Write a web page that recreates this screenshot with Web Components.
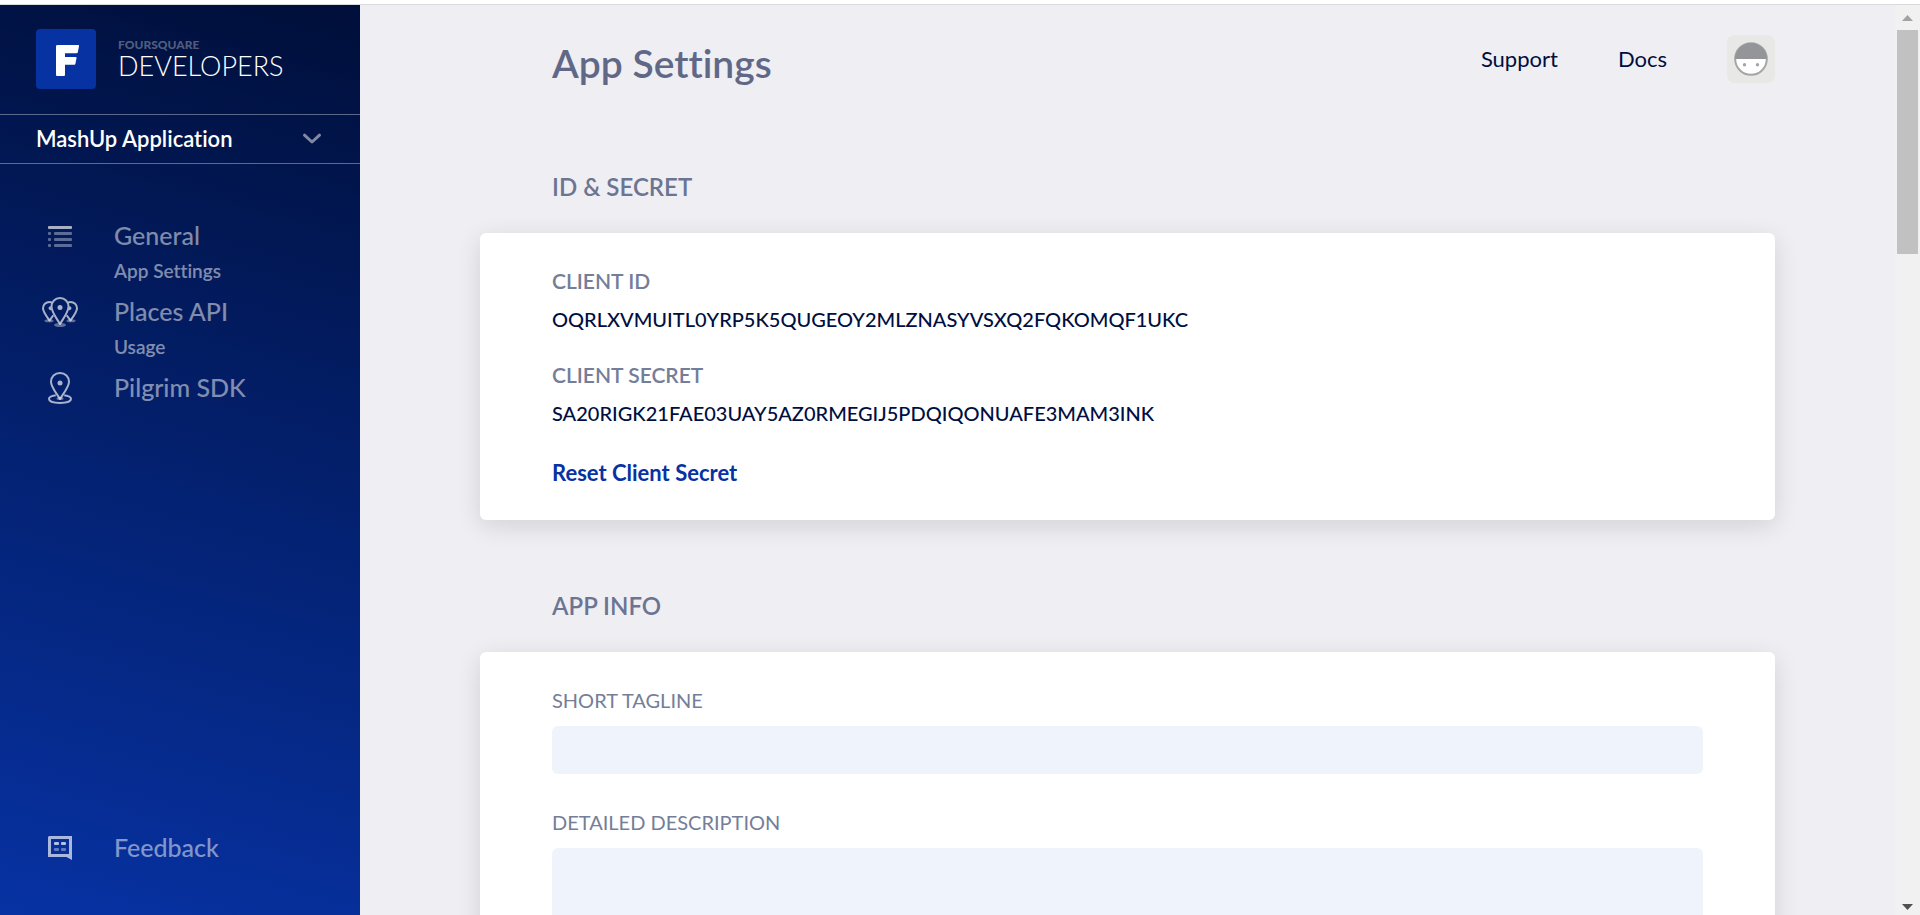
<!DOCTYPE html>
<html lang="en">
<head>
<meta charset="utf-8">
<meta name="viewport" content="width=device-width, initial-scale=1">
<title>App Settings - Foursquare Developers</title>
<style>
  body {
    margin: 0;
    font-family: Lato, "Liberation Sans", sans-serif;
    font-variant-ligatures: none;
    font-size: 20px;
    line-height: 24px;
    background: #efeef3;
    color: #000f3f;
  }
</style>
</head>
<body>
<dev-app>
  <dev-sidebar slot="sidebar">
    <dev-brand slot="brand"></dev-brand>
    <app-picker slot="picker" name="MashUp Application"></app-picker>
    <nav-item icon="list" href="#general" label="General"><a href="#settings">App Settings</a></nav-item>
    <nav-item icon="places" href="#places" label="Places API"><a href="#usage">Usage</a></nav-item>
    <nav-item icon="pilgrim" href="#pilgrim" label="Pilgrim SDK"></nav-item>
    <nav-item slot="footer" icon="feedback" href="#feedback" label="Feedback"></nav-item>
  </dev-sidebar>

  <page-header>
    App Settings
    <a slot="links" href="#support">Support</a>
    <a slot="links" href="#docs">Docs</a>
    <user-avatar slot="links"></user-avatar>
  </page-header>

  <settings-section heading="ID &amp; SECRET">
    <credential-list>
      <credential-item label="CLIENT ID">OQRLXVMUITL0YRP5K5QUGEOY2MLZNASYVSXQ2FQKOMQF1UKC</credential-item>
      <credential-item label="CLIENT SECRET">SA20RIGK21FAE03UAY5AZ0RMEGIJ5PDQIQONUAFE3MAM3INK</credential-item>
    </credential-list>
    <text-button>Reset Client Secret</text-button>
  </settings-section>

  <settings-section heading="APP INFO">
    <text-field label="SHORT TAGLINE"></text-field>
    <text-field label="DETAILED DESCRIPTION" multiline></text-field>
  </settings-section>
</dev-app>

<script>
const define = (name, render, setup) =>
  customElements.define(name, class extends HTMLElement {
    connectedCallback() {
      if (this.shadowRoot) return;
      const template = document.createElement('template');
      template.innerHTML = render(this);
      this.attachShadow({ mode: 'open' }).append(template.content.cloneNode(true));
      if (setup) setup(this.shadowRoot, this);
    }
  });
const attr = (el, name) => el.getAttribute(name).replace(/&/g, '&amp;').replace(/"/g, '&quot;');

const ICONS = {
  list: `<svg width="24" height="20" viewBox="0 0 24 20" overflow="visible" fill="#fff" aria-hidden="true">
    <rect width="24" height="3" rx="1" fill-opacity=".66"/>
    <g fill-opacity=".36">
      <rect y="6" width="3" height="3" rx="1"/><rect x="6" y="6" width="18" height="3" rx="1"/>
      <rect y="12" width="3" height="3" rx="1"/><rect x="6" y="12" width="18" height="3" rx="1"/>
      <rect y="18" width="3" height="3" rx="1"/><rect x="6" y="18" width="18" height="3" rx="1"/>
    </g></svg>`,
  places: `<svg width="36" height="30" viewBox="0 0 36 30" fill="none" stroke="#fff" stroke-width="2" stroke-linejoin="round" aria-hidden="true">
    <g stroke="none" fill="#fff" fill-opacity=".36">
      <ellipse cx="7" cy="23.800" rx="4.500" ry="1.500"/><ellipse cx="29" cy="23.800" rx="4.500" ry="1.500"/><ellipse cx="18" cy="28" rx="6" ry="2"/>
    </g>
    <g opacity=".66">
      <path d="M10.500 5.800C9.500 5.300 8.700 5 7.500 5 3.800 5 1 7.800 1 11.300c0 3.600 3.500 8 6.500 12.200 1.400-1.700 2.700-3.500 3.800-5.200"/>
      <path d="M25.500 5.800c1-.5 1.800-.8 3-.8C32.200 5 35 7.800 35 11.300c0 3.600-3.500 8-6.500 12.200-1.400-1.700-2.700-3.500-3.800-5.200"/>
      <path d="M18 1c-4.900 0-8.500 3.700-8.500 8.500C9.500 15 14 20.500 18 27c4-6.500 8.500-12 8.500-17.500C26.500 4.700 22.900 1 18 1z"/>
      <g stroke="none" fill="#fff"><circle cx="18" cy="10.500" r="2.500"/><path d="M9.500 9.400a2 2 0 1 0-.2 3.600zM26.500 9.400a2 2 0 1 1 .2 3.600z"/></g>
    </g></svg>`,
  pilgrim: `<svg width="24" height="32" viewBox="0 0 24 32" fill="none" stroke="#fff" stroke-width="2" stroke-linejoin="round" aria-hidden="true">
    <ellipse cx="12" cy="26.600" rx="3.500" ry="1.500" stroke="none" fill="#fff" fill-opacity=".4"/>
    <g opacity=".66">
      <path d="M12 1C6.700 1 3 4.900 3 9.800 3 15 8 20.500 12 27c4-6.500 9-12 9-17.200C21 4.900 17.300 1 12 1z"/>
      <path d="M7.800 23.300C4 23.800 1 25.200 1 27.100 1 29.400 5.800 31 12 31s11-1.600 11-3.900c0-1.900-3-3.300-6.800-3.800"/>
      <circle cx="12" cy="11" r="2.500" stroke="none" fill="#fff"/>
    </g></svg>`,
  feedback: `<svg width="24" height="24" viewBox="0 0 24 24" fill="#fff" aria-hidden="true">
    <path fill-opacity=".66" fill-rule="evenodd" d="M1 0h23v24l-5.500-3H0V1zM3 3v15h18V3z"/>
    <g fill-opacity=".7"><rect x="6" y="6" width="5" height="3" rx="1"/><rect x="13" y="6" width="5" height="3" rx="1"/></g>
    <g fill-opacity=".36"><rect x="6" y="12" width="5" height="3" rx="1"/><rect x="13" y="12" width="5" height="3" rx="1"/></g></svg>`
};

define('dev-app', () => `
  <style>
    :host { display: grid; grid-template: auto minmax(0, 1fr) / 360px minmax(0, 1fr) auto; height: 100vh; }
    .edge { grid-column: 1 / -1; height: 4px; background: #fff; border-bottom: 1px solid #d9d9de; }
    main { overflow-y: auto; scrollbar-width: none; padding: 30px 120px 70px; display: flex; flex-direction: column; gap: 70px; }
  </style>
  <div class="edge"></div>
  <slot name="sidebar"></slot>
  <main><slot></slot></main>
  <scroll-track aria-hidden="true"></scroll-track>`);

define('scroll-track', () => `
  <style>
    :host { display: flex; flex-direction: column; align-items: center; width: 25px; background: #f1f1f1; }
    svg { flex: none; }
    .run { flex: 1; align-self: stretch; }
    .thumb { height: 26%; margin: 0 2px; background: #c1c1c1; }
  </style>
  <svg width="25" height="25" viewBox="0 0 25 25"><path fill="#a3a3a3" d="M7 16l5.500-6 5.500 6z"/></svg>
  <div class="run"><div class="thumb"></div></div>
  <svg width="25" height="25" viewBox="0 0 25 25"><path fill="#505050" d="M7 14h11l-5.500 6z"/></svg>`);

define('dev-sidebar', () => `
  <style>
    :host { display: flex; flex-direction: column; background: linear-gradient(195deg, #000f3a, #0732a3); color: #fff; }
    nav { flex: 1; display: flex; flex-direction: column; gap: 6px; padding: 52px 36px 47px; }
    .footer { margin-top: auto; }
  </style>
  <slot name="brand"></slot>
  <slot name="picker"></slot>
  <nav aria-label="Developer console">
    <slot></slot>
    <div class="footer"><slot name="footer"></slot></div>
  </nav>`);

define('dev-brand', () => `
  <style>
    :host { display: block; padding: 24px 36px 25px; }
    a { display: flex; align-items: center; gap: 22px; color: #fff; text-decoration: none; }
    .text { display: flex; flex-direction: column; padding-top: 2px; }
    .top { font-size: 12px; font-weight: 900; line-height: 12px; color: rgb(255 255 255 / .33); }
    .name { font-size: 27px; font-weight: 300; line-height: 30px; }
  </style>
  <a href="#home">
    <svg width="60" height="60" viewBox="0 0 60 60" aria-hidden="true">
      <rect width="60" height="60" rx="4" fill="#0732a2"/>
      <path fill="#fff" d="M21.500 16H42c1 0 1.200.6 1 1.300l-1.200 6c-.2.700-.6 1-1.300 1H29V28h10.500c.8 0 1.200.500 1 1.200l-1.100 5.500c-.2.800-.6 1.100-1.300 1.100H29v9.700c0 1-.5 1.500-1.500 1.500h-6c-1 0-1.500-.5-1.500-1.500v-28c0-1 .5-1.500 1.500-1.500z"/>
    </svg>
    <span class="text"><span class="top">FOURSQUARE</span><span class="name">DEVELOPERS</span></span>
  </a>`);

define('app-picker', el => `
  <style>
    :host { display: grid; align-items: center; border: solid rgb(255 255 255 / .36); border-width: 1px 0; }
    select, svg { grid-area: 1 / 1; }
    select { appearance: none; height: 48px; padding: 0 72px 0 36px; border: 0; background: none; color: #fff; font: 600 22px/24px Lato, "Liberation Sans", sans-serif; font-variant-ligatures: none; }
    svg { justify-self: end; margin-right: 38px; pointer-events: none; }
  </style>
  <select aria-label="Application"><option>${attr(el, 'name')}</option></select>
  <svg width="20" height="12" viewBox="0 0 20 12" fill="none" stroke="#fff" stroke-opacity=".5" stroke-width="3" stroke-linecap="round" stroke-linejoin="round" aria-hidden="true"><path d="M2.500 2.200L10 9l7.500-6.800"/></svg>`);

define('nav-item', el => `
  <style>
    :host { display: block; color: rgb(255 255 255 / .5); }
    .main { display: flex; align-items: center; gap: 30px; height: 40px; color: inherit; font-size: 25px; line-height: 40px; font-weight: 500; text-decoration: none; }
    .icon { display: flex; justify-content: center; width: 48px; }
    .label { padding-bottom: 2px; }
    ::slotted(a) { display: block; margin-left: 78px; font-size: 19px; line-height: 30px; font-weight: 600; color: inherit; text-decoration: none; }
  </style>
  <a class="main" href="${attr(el, 'href')}"><span class="icon">${ICONS[attr(el, 'icon')]}</span><span class="label">${attr(el, 'label')}</span></a>
  <slot></slot>`);

define('page-header', () => `
  <style>
    :host { display: flex; justify-content: space-between; align-items: flex-start; padding: 0 0 10px 72px; }
    h1 { margin: 0; font-size: 39px; line-height: 56px; font-weight: 600; color: #5f6987; }
    nav { display: flex; align-items: center; gap: 60px; }
    ::slotted(a) { color: inherit; font-size: 22px; line-height: 48px; text-decoration: none; }
  </style>
  <h1><slot></slot></h1>
  <nav aria-label="Help and account"><slot name="links"></slot></nav>`);

define('user-avatar', () => `
  <style>
    :host { display: block; }
    button { display: grid; place-items: center; width: 48px; height: 48px; padding: 0; border: 0; border-radius: 8px; background: #e8e8e6; }
  </style>
  <button type="button" aria-label="Account">
    <svg width="34" height="34" viewBox="0 0 34 34" aria-hidden="true">
      <circle cx="17" cy="17" r="15.800" fill="#fff" stroke="#a3a5a7" stroke-width="2"/>
      <path fill="#939598" d="M1 17a16 16 0 0 1 32 0z"/>
      <circle cx="10.500" cy="22.700" r="1.700" fill="#a3a5a7"/><circle cx="23.500" cy="22.700" r="1.700" fill="#a3a5a7"/>
    </svg>
  </button>`);

define('settings-section', el => `
  <style>
    :host { display: block; }
    h2 { margin: 0 0 30px 72px; font-size: 24px; line-height: 32px; font-weight: 600; color: #6b7592; }
    .card { display: flex; flex-direction: column; gap: 36px; padding: 36px 72px 35px; border-radius: 6px; background: #fff; box-shadow: 0 6px 24px rgb(0 0 0 / .12); }
  </style>
  <section aria-labelledby="heading">
    <h2 id="heading">${attr(el, 'heading')}</h2>
    <div class="card"><slot></slot></div>
  </section>`);

define('credential-list', () => `
  <style>:host { display: flex; flex-direction: column; gap: 32px; }</style>
  <slot></slot>`);

define('credential-item', el => `
  <style>
    :host { display: block; }
    dl { margin: 0; display: flex; flex-direction: column; gap: 14px; }
    dt { font-size: 21px; font-weight: 600; color: #747e98; }
    dd { margin: 0; font-weight: 500; overflow-wrap: anywhere; }
  </style>
  <dl><dt>${attr(el, 'label')}</dt><dd><slot></slot></dd></dl>`);

define('text-button', () => `
  <style>
    :host { display: block; }
    button { display: block; padding: 0; border: 0; background: none; color: #0732a2; font: 700 22px/24px Lato, "Liberation Sans", sans-serif; font-variant-ligatures: none; }
  </style>
  <button type="button"><slot></slot></button>`);

define('text-field', el => `
  <style>
    :host { display: flex; flex-direction: column; gap: 14px; }
    label { color: #747e98; }
    input, textarea { display: block; box-sizing: border-box; width: 100%; height: 48px; margin: 0; padding: 12px; border: 0; border-radius: 6px; background: #eff3fb; color: inherit; font: inherit; resize: none; }
    textarea { height: 144px; }
  </style>
  <label for="field">${attr(el, 'label')}</label>
  ${el.hasAttribute('multiline') ? '<textarea id="field"></textarea>' : '<input id="field" type="text">'}`);
</script>
</body>
</html>
